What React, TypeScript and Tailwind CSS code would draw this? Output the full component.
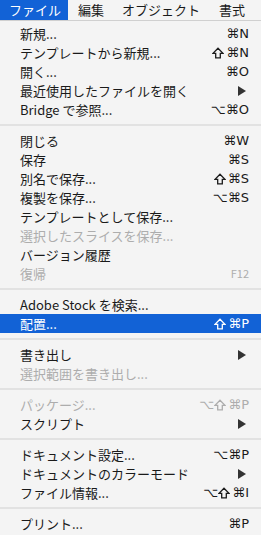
import React from "react";

type Item =
  | { type: "sep" }
  | { type: "item"; label: string; sc?: string; sub?: boolean; dis?: boolean; hi?: boolean };

const items: Item[] = [
  { type: "item", label: "新規...", sc: "⌘N" },
  { type: "item", label: "テンプレートから新規...", sc: "⇧⌘N" },
  { type: "item", label: "開く...", sc: "⌘O" },
  { type: "item", label: "最近使用したファイルを開く", sub: true },
  { type: "item", label: "Bridge で参照...", sc: "⌥⌘O" },
  { type: "sep" },
  { type: "item", label: "閉じる", sc: "⌘W" },
  { type: "item", label: "保存", sc: "⌘S" },
  { type: "item", label: "別名で保存...", sc: "⇧⌘S" },
  { type: "item", label: "複製を保存...", sc: "⌥⌘S" },
  { type: "item", label: "テンプレートとして保存..." },
  { type: "item", label: "選択したスライスを保存...", dis: true },
  { type: "item", label: "バージョン履歴" },
  { type: "item", label: "復帰", sc: "F12", dis: true },
  { type: "sep" },
  { type: "item", label: "Adobe Stock を検索..." },
  { type: "item", label: "配置...", sc: "⇧⌘P", hi: true },
  { type: "sep" },
  { type: "item", label: "書き出し", sub: true },
  { type: "item", label: "選択範囲を書き出し...", dis: true },
  { type: "sep" },
  { type: "item", label: "パッケージ...", sc: "⌥⇧⌘P", dis: true },
  { type: "item", label: "スクリプト", sub: true },
  { type: "sep" },
  { type: "item", label: "ドキュメント設定...", sc: "⌥⌘P" },
  { type: "item", label: "ドキュメントのカラーモード", sub: true },
  { type: "item", label: "ファイル情報...", sc: "⌥⇧⌘I" },
  { type: "sep" },
  { type: "item", label: "プリント...", sc: "⌘P" },
];

const font = { fontFamily: '"Noto Sans CJK JP", "DejaVu Sans", sans-serif' };

function Shortcut({ sc }: { sc: string }) {
  if (sc === "F12") return <span className="text-[11px]">F12</span>;
  return (
    <span className="flex items-center text-[13px]" style={{ fontFamily: '"DejaVu Sans", sans-serif' }}>
      {sc.split("").map((c, i) =>
        c === "⇧" ? (
          <svg key={i} width="12" height="12" viewBox="0 0 12 12" className="mr-[2px]">
            <path d="M6 1.2 L11 6.4 H8.3 V10.8 H3.7 V6.4 H1 Z" fill="none" stroke="currentColor" strokeWidth="1.3" strokeLinejoin="miter" />
          </svg>
        ) : (
          <span key={i}>{c}</span>
        )
      )}
    </span>
  );
}

export default function App() {
  return (
    <div className="w-[261px] h-[535px] bg-[#f4f4f4] overflow-hidden" style={font}>
      <div className="flex h-[21px] border-b border-[#d0d0d0] text-[13px] text-[#1a1a1a] items-stretch">
        <div className="w-[68px] bg-[#1262d6] text-white flex items-center pl-[9px]">ファイル</div>
        <div className="flex items-center pl-[10px]">編集</div>
        <div className="flex items-center pl-[18px]">オブジェクト</div>
        <div className="flex items-center pl-[19px]">書式</div>
      </div>
      <div className="pt-[3px]">
        {items.map((it, i) =>
          it.type === "sep" ? (
            <div key={i} className="py-[5px]">
              <div className="h-[2px] bg-[#e2e2e2]" />
            </div>
          ) : (
            <div
              key={i}
              className={
                "flex items-center justify-between h-[19px] pl-[20px] pr-[12px] text-[13px] leading-none " +
                (it.hi ? "bg-[#1262d6] text-white" : it.dis ? "text-[#adadad]" : "text-[#1a1a1a]")
              }
            >
              <span>{it.label}</span>
              {it.sc && <Shortcut sc={it.sc} />}
              {it.sub && (
                <svg width="8" height="10" viewBox="0 0 8 10" className="mr-[3px]">
                  <path d="M0 0 L8 5 L0 10 Z" fill="#333" />
                </svg>
              )}
            </div>
          )
        )}
      </div>
    </div>
  );
}
